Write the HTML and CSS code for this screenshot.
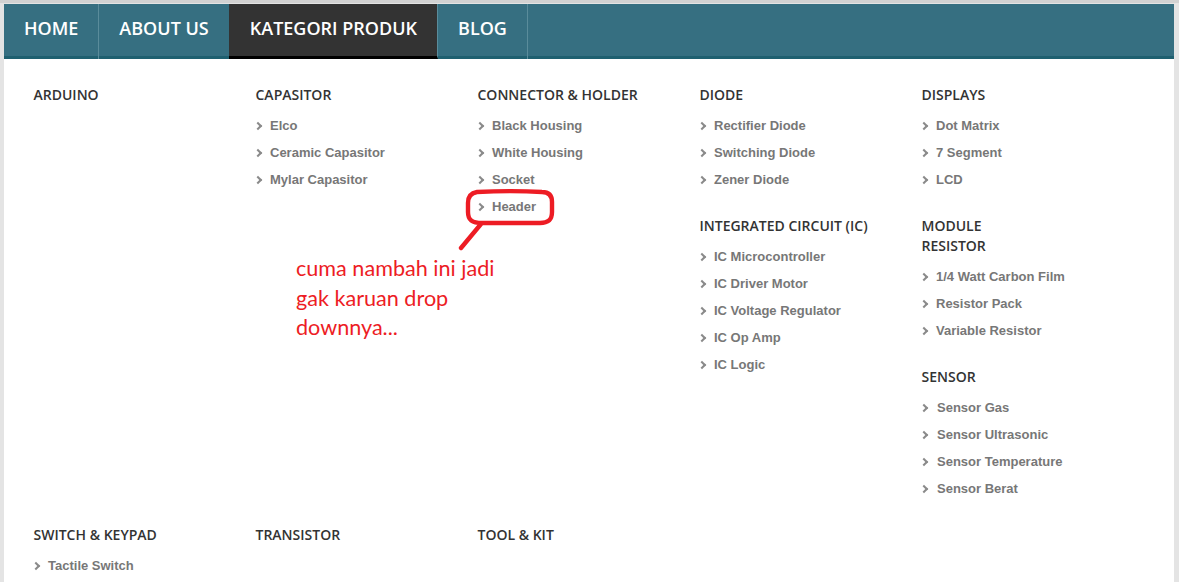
FILE: index.html
```html
<!DOCTYPE html>
<html lang="en">
<head>
    <meta charset="UTF-8">
    <meta name="viewport" content="width=device-width, initial-scale=1.0">
    <title>Kategori Produk</title>
    <link rel="stylesheet" href="styles.css">
</head>
<body>
    <div class="wrap">
        <ul class="nav">
            <li><a href="#">HOME</a></li>
            <li><a href="#">ABOUT US</a></li>
            <li class="active"><a href="#">KATEGORI PRODUK</a></li>
            <li><a href="#">BLOG</a></li>
        </ul>

        <div class="menu">
            <div class="col">
                <div class="group">
                    <h4>ARDUINO</h4>
                </div>
            </div>
            <div class="col">
                <div class="group">
                    <h4>CAPASITOR</h4>
                    <ul>
                        <li>Elco</li>
                        <li>Ceramic Capasitor</li>
                        <li>Mylar Capasitor</li>
                    </ul>
                </div>
            </div>
            <div class="col">
                <div class="group">
                    <h4>CONNECTOR &amp; HOLDER</h4>
                    <ul>
                        <li>Black Housing</li>
                        <li>White Housing</li>
                        <li>Socket</li>
                        <li>Header</li>
                    </ul>
                </div>
            </div>
            <div class="col">
                <div class="group">
                    <h4>DIODE</h4>
                    <ul>
                        <li>Rectifier Diode</li>
                        <li>Switching Diode</li>
                        <li>Zener Diode</li>
                    </ul>
                </div>
                <div class="group">
                    <h4>INTEGRATED CIRCUIT (IC)</h4>
                    <ul>
                        <li>IC Microcontroller</li>
                        <li>IC Driver Motor</li>
                        <li>IC Voltage Regulator</li>
                        <li>IC Op Amp</li>
                        <li>IC Logic</li>
                    </ul>
                </div>
            </div>
            <div class="col">
                <div class="group">
                    <h4>DISPLAYS</h4>
                    <ul>
                        <li>Dot Matrix</li>
                        <li>7 Segment</li>
                        <li>LCD</li>
                    </ul>
                </div>
                <div class="group">
                    <h4>MODULE<br>RESISTOR</h4>
                    <ul>
                        <li>1/4 Watt Carbon Film</li>
                        <li>Resistor Pack</li>
                        <li>Variable Resistor</li>
                    </ul>
                </div>
                <div class="group sensor">
                    <h4>SENSOR</h4>
                    <ul>
                        <li>Sensor Gas</li>
                        <li>Sensor Ultrasonic</li>
                        <li>Sensor Temperature</li>
                        <li>Sensor Berat</li>
                    </ul>
                </div>
            </div>
            <div class="col">
                <div class="group">
                    <h4>SWITCH &amp; KEYPAD</h4>
                    <ul>
                        <li>Tactile Switch</li>
                    </ul>
                </div>
            </div>
            <div class="col">
                <div class="group">
                    <h4>TRANSISTOR</h4>
                </div>
            </div>
            <div class="col">
                <div class="group">
                    <h4>TOOL &amp; KIT</h4>
                </div>
            </div>
        </div>
    </div>

    <!-- red scribble on top of the screenshot -->
    <svg class="scribble" width="120" height="90" viewBox="0 0 120 90">
        <path d="M19 6 C40 5 66 5 84 6 C91 6 94 10 94 16 L94 26 C94 34 90 37 82 37 L24 37 C14 37 10 34 10 26 L10 17 C10 10 13 7 19 6 Z M23 38 L3 62" fill="none" stroke="#ed1c24" stroke-width="4.4" stroke-linecap="round" stroke-linejoin="round"/>
    </svg>
    <p class="note">cuma nambah ini jadi<br>gak karuan drop<br>downnya...</p>
</body>
</html>
```

FILE: styles.css
```css
html, body {
    height: 100%;
}

body {
    margin: 0;
    overflow: hidden;
    background-color: #e4e4e4;
    border-top: 3px solid #d2d2d2;
    box-sizing: border-box;
}

ul {
    list-style: none;
    margin: 0;
    padding: 0;
}

.wrap {
    width: 1170px;
    height: 578px;
    margin: 1px 0 0 4px;
    background-color: #fff;
}

.nav {
    display: flex;
    height: 52px;
    background-color: #366f81;
    border-bottom: 3px solid #1f6070;
    font-family: 'Open Sans', sans-serif;
}
.nav li {
    border-right: 1px solid #5a8c9b;
    margin-bottom: -3px;
}
.nav a {
    display: block;
    padding: 0 20px;
    line-height: 48px;
    font-size: 18px;
    font-weight: 600;
    color: #fff;
    text-decoration: none;
}
.nav .active {
    margin-left: -1px;
    padding-left: 1px;
    background-color: #333;
    border-bottom: 3px solid #000;
}

.menu {
    display: grid;
    grid-template-columns: repeat(5, 222px);
    grid-template-rows: 440px auto;
    padding: 26px 0 0 29.5px;
}

.group {
    margin-bottom: 23px;
}
.group:last-child {
    margin-bottom: 0;
}
.group h4 {
    margin: 0 0 7px;
    max-width: 170px;
    font-family: 'Open Sans', sans-serif;
    font-size: 14px;
    font-weight: 560;
    line-height: 20px;
    color: #333;
}
.group li {
    position: relative;
    padding-left: 14.5px;
    font-family: 'Liberation Sans', sans-serif;
    font-size: 13px;
    font-weight: 700;
    line-height: 27px;
    color: #777;
}
.group li::before {
    content: "";
    position: absolute;
    left: -1px;
    top: 11px;
    width: 4px;
    height: 4px;
    border-top: 2px solid #8a8a8a;
    border-right: 2px solid #8a8a8a;
    transform: rotate(45deg);
}
.sensor li {
    padding-left: 15.5px;
}

.scribble {
    position: absolute;
    left: 458px;
    top: 186px;
}
.note {
    position: absolute;
    left: 296px;
    top: 254px;
    margin: 0;
    font-family: 'Lato', sans-serif;
    font-size: 21.6px;
    line-height: 29.5px;
    color: #ed1c24;
}
```
